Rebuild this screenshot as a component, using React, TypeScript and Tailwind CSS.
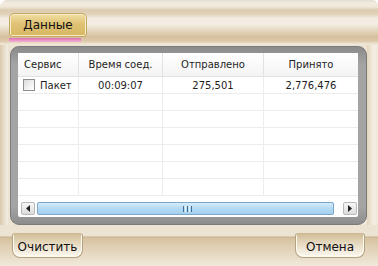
import React from 'react';

const rows = [
  { service: 'Пакет', time: '00:09:07', sent: '275,501', recv: '2,776,476' },
  null,
  null,
  null,
  null,
  null,
  null,
];

function Checkbox() {
  return (
    <span className="inline-block w-[12px] h-[12px] border border-[#8f8f8f] bg-[linear-gradient(135deg,#dcdcdc,#f6f6f6_70%,#ffffff)] shrink-0" />
  );
}

function Scrollbar() {
  return (
    <div className="flex items-center h-[13px] pl-[3px] pr-[1px] gap-[2px]">
      <div className="w-[14px] h-[13px] border border-[#b9b9b9] rounded-[2px] bg-[linear-gradient(to_bottom,#f7f7f7,#dcdcdc)] flex items-center justify-center">
        <svg width="4" height="7" viewBox="0 0 4 7">
          <path d="M4 0 L0 3.5 L4 7 Z" fill="#222" />
        </svg>
      </div>
      <div className="flex-1 h-[13px] rounded-[2px] border border-[#7aa6ca] bg-[linear-gradient(to_bottom,#d6ecfb,#b3d9f3_50%,#a6d0ef)] flex items-center justify-center">
        <div className="flex gap-[1px] ml-[4px]">
          <span className="w-[1px] h-[6px] bg-[#3e6f9a]" />
          <span className="w-[1px] h-[6px] bg-[#e9f5fd]" />
          <span className="w-[1px] h-[6px] bg-[#3e6f9a]" />
          <span className="w-[1px] h-[6px] bg-[#e9f5fd]" />
          <span className="w-[1px] h-[6px] bg-[#3e6f9a]" />
        </div>
      </div>
      <div className="w-[5px]" />
      <div className="w-[14px] h-[13px] border border-[#b9b9b9] rounded-[2px] bg-[linear-gradient(to_bottom,#f7f7f7,#dcdcdc)] flex items-center justify-center">
        <svg width="4" height="7" viewBox="0 0 4 7">
          <path d="M0 0 L4 3.5 L0 7 Z" fill="#222" />
        </svg>
      </div>
    </div>
  );
}

function FooterButton({ label, width }: { label: string; width: string }) {
  return (
    <button
      className={`${width} h-[25px] mt-[8px] rounded-b-[8px] rounded-t-[3px] border border-[#b3a283] border-t-[#cbb994] bg-[linear-gradient(to_bottom,#d1bd97,#e6d9c0_40%,#fbf8f1)] shadow-[inset_0_-1px_0_1px_#fffaf0] text-[12px] text-[#111] leading-none pt-[2px]`}
    >
      {label}
    </button>
  );
}

export default function App() {
  return (
    <div className="w-[378px] h-[266px] overflow-hidden rounded-tl-[8px] rounded-tr-[6px] bg-[#ede3d2] font-['DejaVu_Sans',sans-serif] flex flex-col">
      {/* Top band with tab */}
      <div className="h-[45px] shrink-0 pl-[9px] pt-[13px] bg-[linear-gradient(to_bottom,#e4ded3_0px,#f2ebdf_3px,#efe7d9_7px,#dccbb0_10px,#e1d2b9_14px,#f1eadf_18px,#f4eee4_24px,#e6d8c1_30px,#d6c19f_37px,#dcc8a8_41px,#efe6d6_44px)]">
        <div className="w-[78px] h-[24px] rounded-t-[5px] rounded-b-[3px] border border-[#c4a862] bg-[linear-gradient(to_bottom,#f0dfa2,#e0c274_45%,#d6b764)] shadow-[inset_0_0_0_1px_#f7edc9] flex items-center justify-center text-[12px] text-[#111]">
          Данные
        </div>
        <div className="w-[72px] h-[4px] mt-[1px] bg-[linear-gradient(to_bottom,#dc6fb1,#f2b4d6)]" />
      </div>

      {/* Middle */}
      <div className="flex-1 flex">
        <div className="w-[8px] bg-[linear-gradient(to_right,#d9c9ad,#e6d9c4_40%,#f3ede2)]" />
        <div className="w-[2px]" />
        <div className="w-[357px] h-[179px] mt-[1px] rounded-[9px] border border-[#7b7b7b] bg-[linear-gradient(to_bottom,#8a8a8a,#a4a4a4_10%,#a4a4a4_90%,#8d8d8d)] shadow-[1px_1px_0_#f7f1e7] pl-[7px] pr-[8px] pt-[6px] pb-[7px]">
          <div className="h-full bg-white rounded-[2px] flex flex-col text-[10px] text-[#1e1e1e]">
            <div className="flex-1 overflow-hidden">
              <div className="flex h-[24px] bg-[linear-gradient(to_bottom,#ffffff,#f4f4f4)] border-b border-[#e2e2e2] items-center">
                <div className="w-[61px] pl-[6px] border-r border-[#e2e2e2] h-full flex items-center">Сервис</div>
                <div className="w-[84px] text-center border-r border-[#e2e2e2] h-full flex items-center justify-center">Время соед.</div>
                <div className="w-[101px] text-center border-r border-[#e2e2e2] h-full flex items-center justify-center">Отправлено</div>
                <div className="flex-1 text-center h-full flex items-center justify-center">Принято</div>
              </div>
              {rows.map((r, i) => (
                <div key={i} className="flex h-[17px] border-b border-[#ececec]">
                  <div className="w-[61px] pl-[5px] gap-[5px] border-r border-[#ececec] flex items-center">
                    {r && <Checkbox />}
                    {r?.service}
                  </div>
                  <div className="w-[84px] border-r border-[#ececec] flex items-center justify-center">{r?.time}</div>
                  <div className="w-[101px] border-r border-[#ececec] flex items-center justify-center">{r?.sent}</div>
                  <div className="flex-1 flex items-center justify-center">{r?.recv}</div>
                </div>
              ))}
            </div>
            <Scrollbar />
            <div className="h-[2px]" />
          </div>
        </div>
        <div className="flex-1 bg-[linear-gradient(to_right,#e4d5bb,#f4eee3_60%,#efe6d7)]" />
      </div>

      {/* Bottom band with buttons */}
      <div className="h-[41px] shrink-0 flex justify-between pl-[12px] pr-[13px] bg-[linear-gradient(to_bottom,#ede3d2_0px,#ede3d2_11px,#c6b18d_12px,#d6c29f_13px,#e0cfb3_22px,#eadfcc_34px,#f1e9dc_41px)]">
        <FooterButton label="Очистить" width="w-[71px]" />
        <FooterButton label="Отмена" width="w-[70px]" />
      </div>
    </div>
  );
}
